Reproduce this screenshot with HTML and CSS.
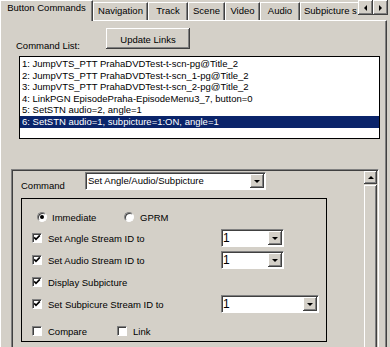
FILE: index.html
```html
<!DOCTYPE html>
<html lang="en">
  <head>
    <meta charset="UTF-8" />
    <meta name="viewport" content="width=device-width, initial-scale=1.0" />
    <title>Button Commands</title>
    <link rel="stylesheet" href="styles.css">
  </head>
  <body>
    <div class="tabs">
      <div class="tab active w-buttons">Button Commands</div>
      <div class="tab w-nav">Navigation</div>
      <div class="tab w-track">Track</div>
      <div class="tab w-scene">Scene</div>
      <div class="tab w-video">Video</div>
      <div class="tab w-audio">Audio</div>
      <div class="tab tab-cut">Subpicture s</div>
      <div class="tab-scroll">
        <div class="btn3d scroll-btn"><span class="arrow-left"></span></div>
        <div class="btn3d scroll-btn"><span class="arrow-right"></span></div>
      </div>
    </div>

    <div class="panel">
      <div class="list-head">
        <div class="list-label">Command List:</div>
        <div class="btn3d update-btn">Update Links</div>
      </div>

      <div class="listbox">
        <div class="item">1: JumpVTS_PTT PrahaDVDTest-t-scn-pg@Title_2</div>
        <div class="item">2: JumpVTS_PTT PrahaDVDTest-t-scn_1-pg@Title_2</div>
        <div class="item">3: JumpVTS_PTT PrahaDVDTest-t-scn_2-pg@Title_2</div>
        <div class="item">4: LinkPGN EpisodePraha-EpisodeMenu3_7, button=0</div>
        <div class="item">5: SetSTN audio=2, angle=1</div>
        <div class="item selected">6: SetSTN audio=1, subpicture=1:ON, angle=1</div>
      </div>

      <div class="scroller">
        <div class="scroll-body">
          <div class="command-row">
            <div class="command-label">Command</div>
            <div class="combo combo-command">
              <div class="combo-value">Set Angle/Audio/Subpicture</div>
              <div class="btn3d combo-btn"><span class="arrow-down"></span></div>
            </div>
          </div>

          <div class="group">
            <div class="radio-row">
              <div class="opt opt-radio"><span class="radio on"></span>Immediate</div>
              <div class="opt"><span class="radio"></span>GPRM</div>
            </div>

            <div class="check-row">
              <div class="opt opt-label">
                <span class="check"><svg viewBox="0 0 8 8" width="8" height="8"><path d="M1.2 3.4 L3 5.4 L6.8 1.4" fill="none" stroke="#000" stroke-width="1.6"/></svg></span>
                Set Angle Stream ID to
              </div>
              <div class="combo combo-small">
                <div class="combo-value big">1</div>
                <div class="btn3d combo-btn"><span class="arrow-down"></span></div>
              </div>
            </div>

            <div class="check-row">
              <div class="opt opt-label">
                <span class="check"><svg viewBox="0 0 8 8" width="8" height="8"><path d="M1.2 3.4 L3 5.4 L6.8 1.4" fill="none" stroke="#000" stroke-width="1.6"/></svg></span>
                Set Audio Stream ID to
              </div>
              <div class="combo combo-small">
                <div class="combo-value big">1</div>
                <div class="btn3d combo-btn"><span class="arrow-down"></span></div>
              </div>
            </div>

            <div class="check-row">
              <div class="opt opt-label">
                <span class="check"><svg viewBox="0 0 8 8" width="8" height="8"><path d="M1.2 3.4 L3 5.4 L6.8 1.4" fill="none" stroke="#000" stroke-width="1.6"/></svg></span>
                Display Subpicture
              </div>
            </div>

            <div class="check-row">
              <div class="opt opt-label">
                <span class="check"><svg viewBox="0 0 8 8" width="8" height="8"><path d="M1.2 3.4 L3 5.4 L6.8 1.4" fill="none" stroke="#000" stroke-width="1.6"/></svg></span>
                Set Subpicure Stream ID to
              </div>
              <div class="combo combo-wide">
                <div class="combo-value big">1</div>
                <div class="btn3d combo-btn"><span class="arrow-down"></span></div>
              </div>
            </div>

            <div class="last-row">
              <div class="opt opt-compare"><span class="check"></span>Compare</div>
              <div class="opt"><span class="check"></span>Link</div>
            </div>
          </div>
        </div>

        <div class="scrollbar">
          <div class="btn3d bar-btn"><span class="arrow-up"></span></div>
          <div class="btn3d bar-thumb"></div>
        </div>
      </div>
    </div>
  </body>
</html>
```

FILE: styles.css
```css
* {
  box-sizing: border-box;
}
html,
body {
  margin: 0;
  overflow: hidden;
}
body {
  width: 390px;
  height: 347px;
  background-color: #d4d0c8;
  font-family: "Liberation Sans", Arial, sans-serif;
  font-size: 9.5px;
  color: #000;
}

/* raised 3d look, used by buttons */
.btn3d {
  background-color: #d4d0c8;
  box-shadow: inset -1px -1px #404040, inset 1px 1px #fff, inset -2px -2px #808080;
}

/* tab strip */
.tabs {
  display: flex;
  align-items: flex-end;
  height: 20px;
  position: relative;
  z-index: 1;
}
.tab {
  height: 18px;
  padding-top: 2px;
  line-height: 12px;
  text-align: center;
  white-space: nowrap;
  overflow: hidden;
  background-color: #d4d0c8;
  border-top: 1px solid #fff;
  border-left: 1px solid #fff;
  border-right: 1px solid #404040;
  box-shadow: inset -1px 0 #808080;
}
.tab.active {
  height: 21px;
  margin-bottom: -1px;
  padding-top: 1px;
}
.w-buttons { width: 93px; }
.w-nav { width: 55px; }
.w-track { width: 40px; }
.w-scene { width: 37px; }
.w-video { width: 35px; }
.w-audio { width: 40px; }
.tab-cut {
  width: 58px;
  text-align: left;
  padding-left: 3px;
  border-right: none;
  box-shadow: none;
}
.tab-scroll {
  display: flex;
  align-self: flex-start;
}
.scroll-btn {
  width: 15px;
  height: 15px;
  display: flex;
  align-items: center;
  justify-content: center;
}
.arrow-left {
  border-top: 3px solid transparent;
  border-bottom: 3px solid transparent;
  border-right: 3px solid #000;
}
.arrow-right {
  border-top: 3px solid transparent;
  border-bottom: 3px solid transparent;
  border-left: 3px solid #000;
}
.arrow-down {
  border-left: 3px solid transparent;
  border-right: 3px solid transparent;
  border-top: 3px solid #000;
}
.arrow-up {
  border-left: 3px solid transparent;
  border-right: 3px solid transparent;
  border-bottom: 3px solid #000;
}

/* tab page */
.panel {
  width: 387px;
  height: 340px;
  overflow: hidden;
  padding: 7px 0 0 10px;
  border-top: 1px solid #fff;
  border-left: 1px solid #fff;
  border-right: 1px solid #404040;
  box-shadow: inset -1px 0 #808080;
}
.list-head {
  display: flex;
  height: 21px;
  padding-left: 5px;
}
.list-label {
  width: 90px;
  padding-top: 12px;
  line-height: 12px;
}
.update-btn {
  width: 84px;
  height: 21px;
  padding-top: 2px;
  display: flex;
  align-items: center;
  justify-content: center;
}

.listbox {
  margin: 7px 0 0 8px;
  width: 361px;
  height: 83px;
  padding-top: 1px;
  background-color: #fff;
  border: 1px solid #000;
}
.item {
  height: 11.6px;
  line-height: 11.6px;
  padding-left: 2px;
  white-space: nowrap;
}
.item.selected {
  background-color: #0a246a;
  color: #fff;
}

/* scrolling area with the command editor */
.scroller {
  margin-top: 30px;
  width: 368px;
  height: 200px;
  display: flex;
  padding: 1px;
  border: 1px solid;
  border-color: #808080 #fff #fff #808080;
  box-shadow: inset 1px 1px #404040, inset -1px -1px #d4d0c8;
}
.scroll-body {
  flex: 1;
  padding-left: 8px;
}
.scrollbar {
  width: 13px;
  display: flex;
  flex-direction: column;
}
.bar-btn {
  height: 13px;
  display: flex;
  align-items: center;
  justify-content: center;
}
.bar-thumb {
  flex: 1;
  margin-top: 1px;
}

.command-row {
  display: flex;
  height: 19px;
}
.command-label {
  width: 64px;
  padding-top: 9px;
  line-height: 12px;
}

.combo {
  display: flex;
  height: 18px;
  padding: 1px;
  background-color: #fff;
  border: 1px solid;
  border-color: #808080 #fff #fff #808080;
  box-shadow: inset 1px 1px #404040;
}
.combo-command {
  margin-top: 1px;
  width: 181px;
}
.combo-small { width: 63px; }
.combo-wide { width: 98px; }
.combo-value {
  flex: 1;
  padding-left: 1px;
  line-height: 14px;
  white-space: nowrap;
  overflow: hidden;
}
.combo-value.big {
  font-size: 12px;
  padding-left: 0;
}
.combo-btn {
  width: 14px;
  display: flex;
  align-items: center;
  justify-content: center;
}

.group {
  margin-top: 8px;
  width: 306px;
  height: 144px;
  border: 1px solid #000;
  padding-top: 8px;
}
.radio-row {
  display: flex;
  height: 20px;
  padding-left: 15px;
}
.check-row {
  display: flex;
  align-items: center;
  height: 22px;
  padding-left: 10px;
}
.last-row {
  display: flex;
  height: 20px;
  margin-top: 6px;
  padding-left: 10px;
}
.opt {
  display: flex;
  align-items: center;
  gap: 6px;
  white-space: nowrap;
}
.opt-radio {
  width: 87px;
  gap: 5px;
}
.opt-label { width: 189px; }
.opt-compare { width: 85px; }

.radio {
  width: 10px;
  height: 10px;
  border-radius: 50%;
  display: flex;
  align-items: center;
  justify-content: center;
  background-color: #fff;
  border: 1px solid;
  border-color: #808080 #fff #fff #808080;
  box-shadow: inset 1px 1px #404040;
}
.radio.on::after {
  content: "";
  width: 4px;
  height: 4px;
  border-radius: 50%;
  background-color: #000;
}
.check {
  width: 10px;
  height: 10px;
  flex: none;
  display: flex;
  background-color: #fff;
  border: 1px solid;
  border-color: #808080 #fff #fff #808080;
  box-shadow: inset 1px 1px #404040;
}
.check svg {
  display: block;
}
```
